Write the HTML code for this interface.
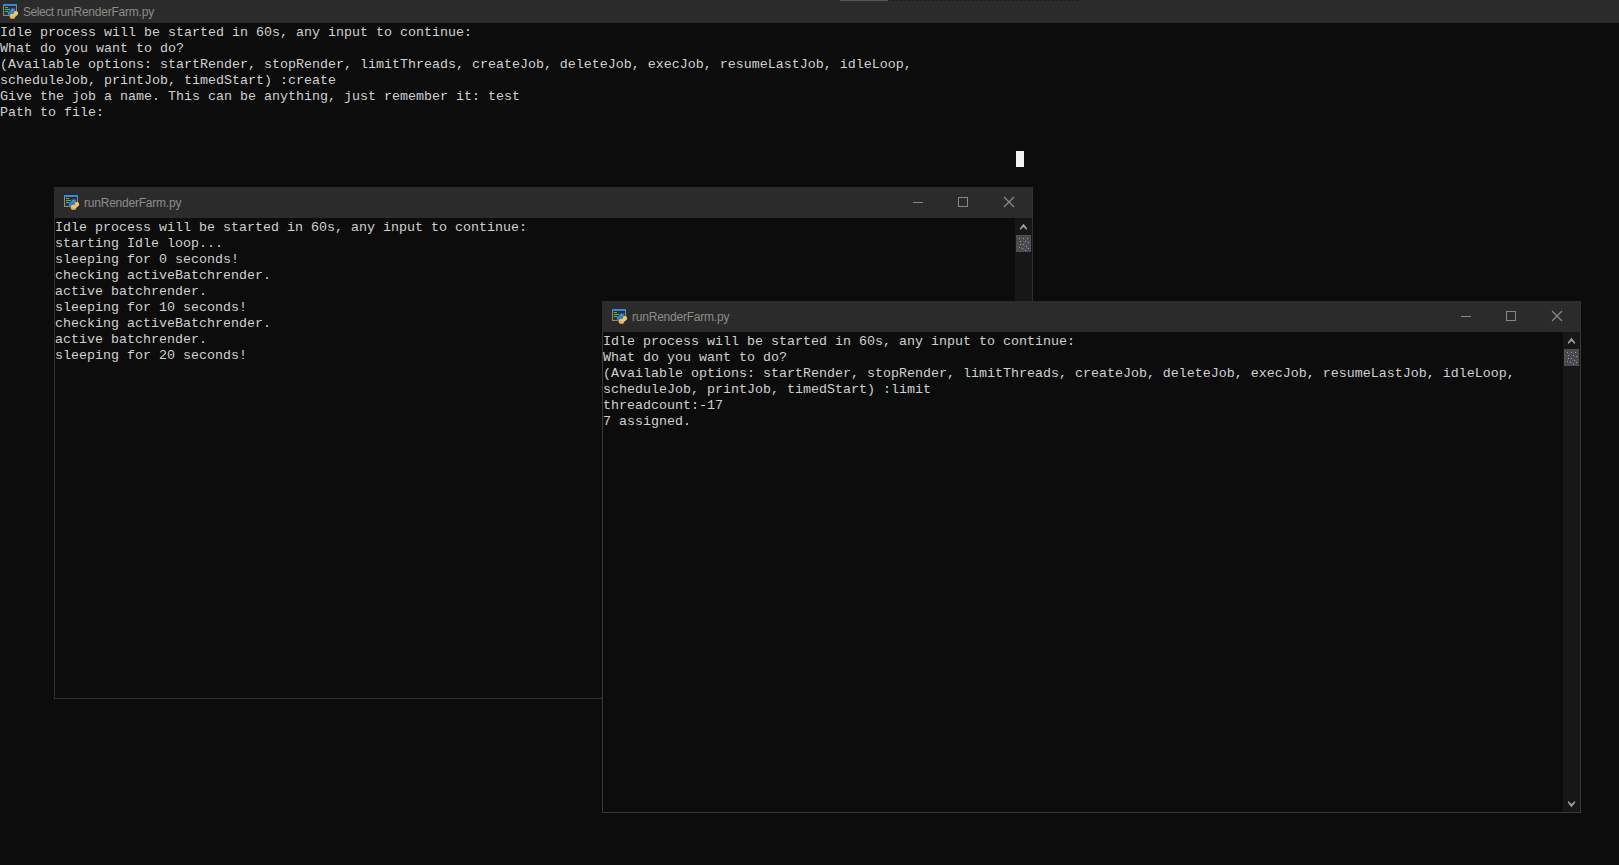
<!DOCTYPE html>
<html>
<head>
<meta charset="utf-8">
<title>runRenderFarm.py</title>
<style>
html,body{margin:0;padding:0;background:#0c0c0c;}
body{width:1619px;height:865px;position:relative;overflow:hidden;font-family:"Liberation Sans",sans-serif;}
.win{position:absolute;background:#0c0c0c;box-sizing:border-box;}
.tb{position:absolute;left:0;top:0;right:0;background:#2b2b2b;}
.title{position:absolute;color:#8e8c88;font-family:"Liberation Sans",sans-serif;font-size:12px;white-space:pre;line-height:16px;letter-spacing:-0.22px;}
pre.con{position:absolute;margin:0;color:#d0d0d0;font-family:"Liberation Mono","DejaVu Sans Mono",monospace;font-size:13.333px;line-height:16px;white-space:pre;}
.sb{position:absolute;background:#171717;}
.ico{position:absolute;width:16px;height:16px;}
svg{display:block;overflow:visible;}
.ctl{position:absolute;top:0;height:31px;}
</style>
</head>
<body>
<svg width="0" height="0" style="position:absolute">
  <defs>
    <linearGradient id="pyy" gradientUnits="userSpaceOnUse" x1="0" y1="7" x2="0" y2="15"><stop offset="0" stop-color="#f2c77c"/><stop offset="0.650" stop-color="#efc070"/><stop offset="1" stop-color="#e08a22"/></linearGradient>
    <symbol id="pyicon" viewBox="0 0 16 16">
      <rect x="0" y="0" width="14" height="12" fill="#8b8b85"/>
      <rect x="1" y="3" width="12" height="8" fill="#3a3031"/>
      <rect x="0" y="0" width="14" height="2" fill="#3a87d2"/>
      <rect x="1" y="2" width="12" height="1" fill="#2a2450"/>
      <rect x="2" y="3" width="3" height="1" fill="#35c535"/>
      <rect x="2" y="5" width="5" height="1" fill="#35c535"/>
      <rect x="2" y="7" width="3" height="1" fill="#35c535"/>
      <ellipse cx="9.900" cy="6.700" rx="2.500" ry="2.400" fill="#2f7fd0"/>
      <ellipse cx="7.100" cy="9.400" rx="2.300" ry="2.700" fill="#2f7fd0"/>
      <rect x="7" y="6.500" width="3" height="3" fill="#2f7fd0"/>
      <ellipse cx="9.400" cy="5.900" rx="0.600" ry="0.600" fill="#9cc4ea"/>
      <ellipse cx="12.900" cy="9.300" rx="2.200" ry="2.400" fill="url(#pyy)"/>
      <ellipse cx="9.500" cy="12.400" rx="2.800" ry="2.600" fill="url(#pyy)"/>
      <rect x="9.500" y="9.800" width="3" height="3" fill="#efc375"/>
    </symbol>
    <symbol id="thumb" viewBox="0 0 15 17">
      <rect width="15" height="17" fill="#574b45"/>
      <path d="M2 1h1v1h-1zM4 1h1v1h-1zM6 1h1v1h-1zM8 1h1v1h-1zM10 1h1v1h-1zM12 1h1v1h-1zM13 2h1v1h-1zM1 3h1v1h-1zM4 3h1v1h-1zM8 3h1v1h-1zM6 4h1v1h-1zM10 4h1v1h-1zM13 4h1v1h-1zM1 5h1v1h-1zM3 5h1v1h-1zM8 5h1v1h-1zM12 5h1v1h-1zM6 6h1v1h-1zM10 6h1v1h-1zM2 7h1v1h-1zM5 7h1v1h-1zM13 7h1v1h-1zM3 8h1v1h-1zM7 8h1v1h-1zM9 8h1v1h-1zM11 8h1v1h-1zM13 9h1v1h-1zM2 10h1v1h-1zM5 10h1v1h-1zM8 10h1v1h-1zM11 10h1v1h-1zM4 11h1v1h-1zM13 11h1v1h-1zM2 12h1v1h-1zM7 12h1v1h-1zM9 12h1v1h-1zM11 12h1v1h-1zM4 13h1v1h-1zM13 13h1v1h-1zM2 14h1v1h-1zM8 14h1v1h-1zM11 14h1v1h-1zM4 15h1v1h-1zM6 15h1v1h-1zM13 15h1v1h-1zM2 16h1v1h-1zM8 16h1v1h-1zM11 16h1v1h-1z" fill="#2a4479"/>
      <path d="M3 3h1v1h-1zM7 3h1v1h-1zM11 3h1v1h-1zM4 6h1v1h-1zM9 6h1v1h-1zM12 7h1v1h-1zM4 9h1v1h-1zM7 9h1v1h-1zM10 11h1v1h-1zM3 12h1v1h-1zM6 13h1v1h-1zM12 13h1v1h-1zM9 15h1v1h-1z" fill="#98988c"/>
    </symbol>
  </defs>
</svg>

<!-- main (background) console window -->
<div class="win" id="w1" style="left:0;top:0;width:1619px;height:865px;">
  <div class="tb" style="height:23px;"></div>
  <div style="position:absolute;left:840px;top:0;width:48px;height:1px;background:#5e554f;"></div>
  <div style="position:absolute;left:888px;top:0;width:193px;height:1px;background:repeating-linear-gradient(90deg,#1c1c1c 0 2px,#2b2b2b 2px 4px);"></div>
  <svg class="ico" style="left:3px;top:4px;" width="16" height="16"><use href="#pyicon"/></svg>
  <div class="title" style="left:23px;top:4px;"><span style="letter-spacing:-0.450px">Select</span> runRenderFarm.py</div>
<pre class="con" style="left:0;top:25px;">Idle process will be started in 60s, any input to continue:
What do you want to do?
(Available options: startRender, stopRender, limitThreads, createJob, deleteJob, execJob, resumeLastJob, idleLoop,
scheduleJob, printJob, timedStart) :create
Give the job a name. This can be anything, just remember it: test
Path to file:</pre>
  <div style="position:absolute;left:1016px;top:151px;width:8px;height:16px;background:#f2f2f2;"></div>
</div>

<!-- second window -->
<div class="win" id="w2" style="left:54px;top:187px;width:979px;height:512px;border:1px solid #2f2f2f;border-top:none;">
  <div class="tb" style="height:31px;left:-1px;right:-1px;border-right:1px solid #333;"></div>
  <svg class="ico" style="left:9px;top:8px;" width="16" height="16"><use href="#pyicon"/></svg>
  <div class="title" style="left:29px;top:8px;">runRenderFarm.py</div>
  <svg class="ctl" style="left:850px;" width="120" height="31" viewBox="0 0 120 31">
    <g fill="none" stroke="#898983" stroke-width="1">
      <path d="M8 15.500h10"/>
      <rect x="53.500" y="10.500" width="9" height="9"/>
      <path d="M99 10l10 10M109 10l-10 10" stroke-width="1.250"/>
    </g>
  </svg>
<pre class="con" style="left:0;top:33px;">Idle process will be started in 60s, any input to continue:
starting Idle loop...
sleeping for 0 seconds!
checking activeBatchrender.
active batchrender.
sleeping for 10 seconds!
checking activeBatchrender.
active batchrender.
sleeping for 20 seconds!</pre>
  <div class="sb" style="left:960px;top:31px;width:17px;height:480px;">
    <svg width="17" height="480" viewBox="0 0 17 480">
      <path d="M8.500 5.800L12.200 10.500 11.700 12.100 8.500 9 5.300 12.100 4.800 10.500z" fill="#9ba199"/>
      <use href="#thumb" x="1" y="17" width="15" height="17"/>
    </svg>
  </div>
</div>

<!-- third window -->
<div class="win" id="w3" style="left:602px;top:301px;width:979px;height:512px;border:1px solid #373737;border-top:none;">
  <div class="tb" style="height:31px;left:-1px;right:-1px;border-right:1px solid #333;"></div>
  <svg class="ico" style="left:9px;top:8px;" width="16" height="16"><use href="#pyicon"/></svg>
  <div class="title" style="left:29px;top:8px;">runRenderFarm.py</div>
  <svg class="ctl" style="left:850px;" width="120" height="31" viewBox="0 0 120 31">
    <g fill="none" stroke="#898983" stroke-width="1">
      <path d="M8 15.500h10"/>
      <rect x="53.500" y="10.500" width="9" height="9"/>
      <path d="M99 10l10 10M109 10l-10 10" stroke-width="1.250"/>
    </g>
  </svg>
<pre class="con" style="left:0;top:33px;">Idle process will be started in 60s, any input to continue:
What do you want to do?
(Available options: startRender, stopRender, limitThreads, createJob, deleteJob, execJob, resumeLastJob, idleLoop,
scheduleJob, printJob, timedStart) :limit
threadcount:-17
7 assigned.</pre>
  <div class="sb" style="left:960px;top:31px;width:17px;height:480px;">
    <svg width="17" height="480" viewBox="0 0 17 480">
      <path d="M8.500 5.800L12.200 10.500 11.700 12.100 8.500 9 5.300 12.100 4.800 10.500z" fill="#9ba199"/>
      <use href="#thumb" x="1" y="17" width="15" height="17"/>
      <path d="M8.500 475.200L12.200 470.500 11.700 468.900 8.500 472 5.300 468.900 4.800 470.500z" fill="#9ba199"/>
    </svg>
  </div>
</div>

</body>
</html>
